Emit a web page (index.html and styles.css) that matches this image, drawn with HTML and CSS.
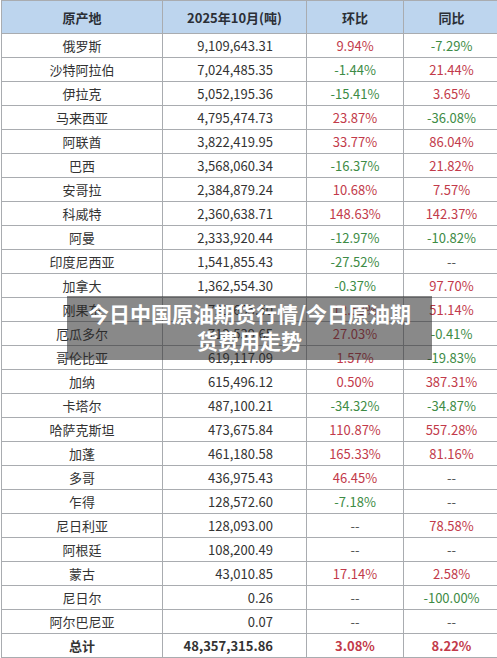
FILE: index.html
```html
<!DOCTYPE html>
<html lang="zh-CN">
<head>
  <meta charset="UTF-8">
  <title>原油进口来源</title>
  <link rel="stylesheet" href="styles.css">
</head>
<body>
  <div class="wrap">
    <table class="oil-table">
      <thead>
        <tr>
          <th class="c1">原产地</th>
          <th class="c2">2025年10月(吨)</th>
          <th class="c3">环比</th>
          <th class="c4">同比</th>
        </tr>
      </thead>
      <tbody>
        <tr><td>俄罗斯</td><td class="num">9,109,643.31</td><td class="up">9.94%</td><td class="down">-7.29%</td></tr>
        <tr><td>沙特阿拉伯</td><td class="num">7,024,485.35</td><td class="down">-1.44%</td><td class="up">21.44%</td></tr>
        <tr><td>伊拉克</td><td class="num">5,052,195.36</td><td class="down">-15.41%</td><td class="up">3.65%</td></tr>
        <tr><td>马来西亚</td><td class="num">4,795,474.73</td><td class="up">23.87%</td><td class="down">-36.08%</td></tr>
        <tr><td>阿联酋</td><td class="num">3,822,419.95</td><td class="up">33.77%</td><td class="up">86.04%</td></tr>
        <tr><td>巴西</td><td class="num">3,568,060.34</td><td class="down">-16.37%</td><td class="up">21.82%</td></tr>
        <tr><td>安哥拉</td><td class="num">2,384,879.24</td><td class="up">10.68%</td><td class="up">7.57%</td></tr>
        <tr><td>科威特</td><td class="num">2,360,638.71</td><td class="up">148.63%</td><td class="up">142.37%</td></tr>
        <tr><td>阿曼</td><td class="num">2,333,920.44</td><td class="down">-12.97%</td><td class="down">-10.82%</td></tr>
        <tr><td>印度尼西亚</td><td class="num">1,541,855.43</td><td class="down">-27.52%</td><td class="none">--</td></tr>
        <tr><td>加拿大</td><td class="num">1,362,554.30</td><td class="down">-0.37%</td><td class="up">97.70%</td></tr>
        <tr><td>刚果布</td><td class="num">721,655.50</td><td class="up">12.53%</td><td class="up">51.14%</td></tr>
        <tr><td>厄瓜多尔</td><td class="num">712,539.65</td><td class="up">27.03%</td><td class="down">-0.41%</td></tr>
        <tr><td>哥伦比亚</td><td class="num">619,117.09</td><td class="up">1.57%</td><td class="down">-19.83%</td></tr>
        <tr><td>加纳</td><td class="num">615,496.12</td><td class="up">0.50%</td><td class="up">387.31%</td></tr>
        <tr><td>卡塔尔</td><td class="num">487,100.21</td><td class="down">-34.32%</td><td class="down">-34.87%</td></tr>
        <tr><td>哈萨克斯坦</td><td class="num">473,675.84</td><td class="up">110.87%</td><td class="up">557.28%</td></tr>
        <tr><td>加蓬</td><td class="num">461,180.58</td><td class="up">165.33%</td><td class="up">81.16%</td></tr>
        <tr><td>多哥</td><td class="num">436,975.43</td><td class="up">46.45%</td><td class="none">--</td></tr>
        <tr><td>乍得</td><td class="num">128,572.60</td><td class="down">-7.18%</td><td class="none">--</td></tr>
        <tr><td>尼日利亚</td><td class="num">128,093.00</td><td class="none">--</td><td class="up">78.58%</td></tr>
        <tr><td>阿根廷</td><td class="num">108,200.49</td><td class="none">--</td><td class="none">--</td></tr>
        <tr><td>蒙古</td><td class="num">43,010.85</td><td class="up">17.14%</td><td class="up">2.58%</td></tr>
        <tr><td>尼日尔</td><td class="num">0.26</td><td class="none">--</td><td class="down">-100.00%</td></tr>
        <tr><td>阿尔巴尼亚</td><td class="num">0.07</td><td class="none">--</td><td class="none">--</td></tr>
        <tr class="total"><td>总计</td><td class="num">48,357,315.86</td><td class="up">3.08%</td><td class="up">8.22%</td></tr>
      </tbody>
    </table>
    <div class="caption">今日中国原油期货行情/今日原油期货费用走势</div>
  </div>
</body>
</html>
```

FILE: styles.css
```css
body {
  margin: 0;
  background-color: #fff;
  font-family: "Noto Sans CJK SC", "Noto Sans", sans-serif;
}

.wrap {
  position: relative;
  width: 497px;
  height: 658px;
  overflow: hidden;
}

.oil-table {
  border-collapse: collapse;
  margin-left: 1px;
  width: 494px;
  table-layout: fixed;
  font-size: 13px;
  color: #333;
}

.oil-table th,
.oil-table td {
  border: 1px solid #a9acb0;
  text-align: center;
  padding: 0;
}

.oil-table th {
  height: 32px;
  background-color: #bdd5ee;
  font-weight: bold;
  color: #2b2f36;
}

.oil-table td {
  height: 23px;
}

.c1 { width: 160px; }
.c2 { width: 143px; }
.c3 { width: 96px; }
.c4 { width: 95px; }

.oil-table td.num {
  text-align: right;
  padding-right: 33px;
}

.up { color: #c23a4a; }
.down { color: #3d8b45; }
.none { color: #555; }

.total td {
  font-weight: bold;
}

.caption {
  position: absolute;
  left: 67px;
  top: 296px;
  width: 365px;
  height: 64px;
  padding: 4px 15px 0;
  box-sizing: border-box;
  background-color: rgba(40, 40, 40, 0.55);
  color: #fff;
  font-size: 21px;
  font-weight: bold;
  line-height: 27px;
  text-align: center;
}
```
